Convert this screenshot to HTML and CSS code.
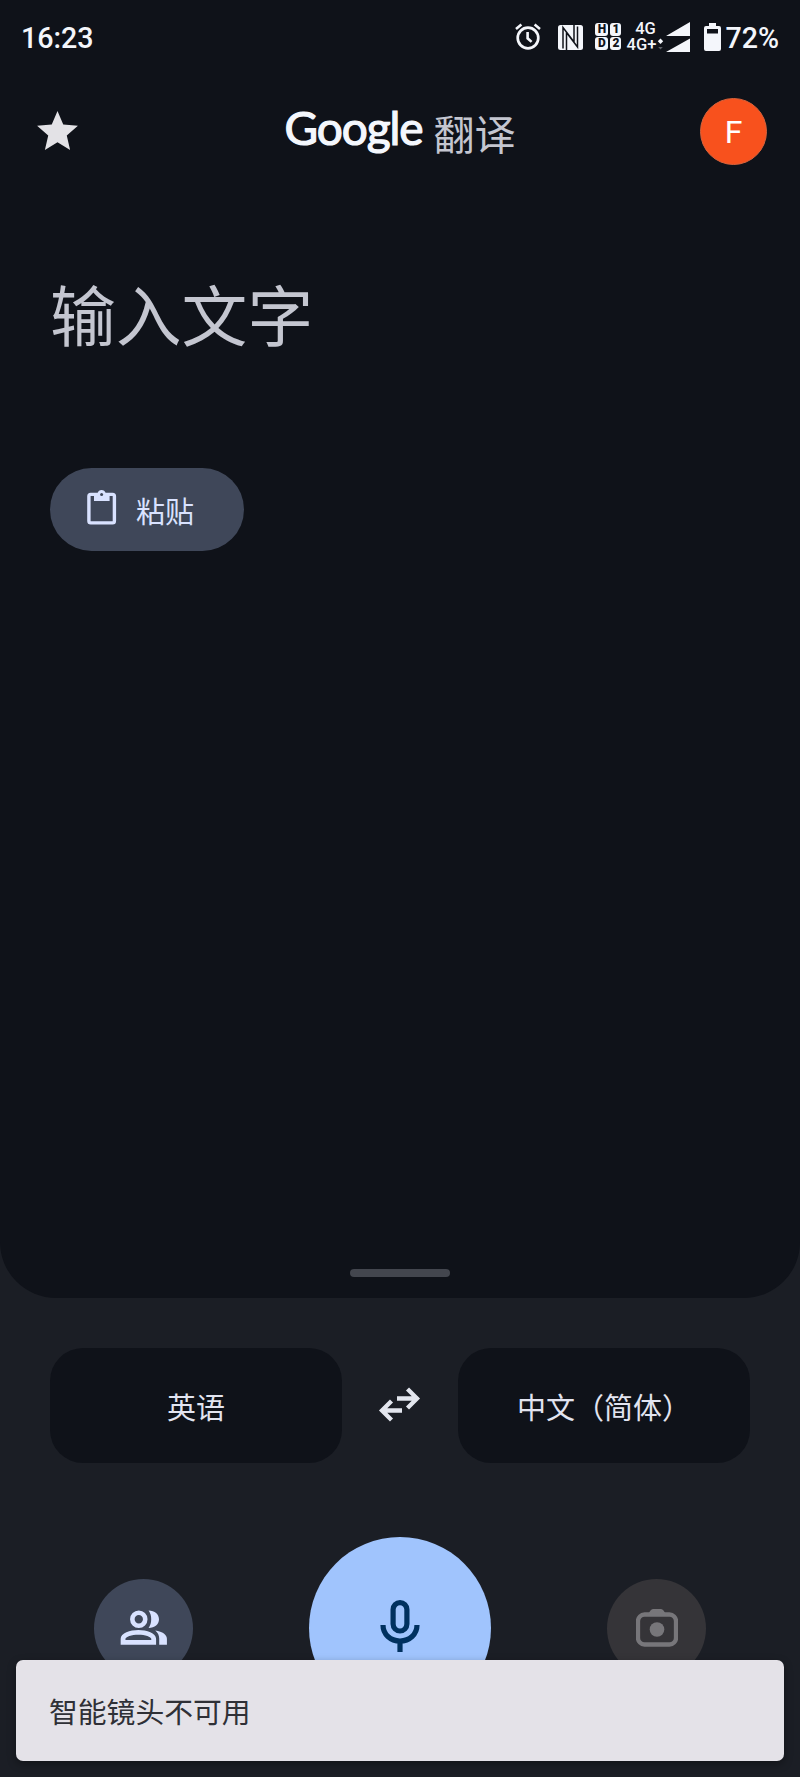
FILE: index.html
```html
<!DOCTYPE html>
<html lang="zh-CN">

<head>
    <meta charset="utf-8">
    <link rel="stylesheet" href="styles.css">
    <title>Google 翻译</title>
</head>

<body>
    <div class="app">
        <div class="panel">
            <div class="status-bar">
                <div class="time">16:23</div>
                <svg class="alarm" width="28" height="28" viewBox="0 0 28 28" fill="none" stroke="#f4f6fb">
                    <circle cx="14" cy="15" r="10.300" stroke-width="2.700" />
                    <path d="M13.600 9v6.300l4 3.600" stroke-width="2.600" />
                    <path d="M2 6l5.400-4.400M26 6l-5.400-4.400" stroke-width="2.600" />
                </svg>
                <svg class="nfc" width="25" height="25" viewBox="0 0 25 25">
                    <rect width="25" height="25" rx="2.500" fill="#f4f6fb" />
                    <path d="M8.500 25V7.500l11 14.500V1.500M16 0v17L5 2.500V23.500" fill="none" stroke="#10131a" stroke-width="1.500" />
                </svg>
                <div class="sim">
                    <span>H</span><span>1</span><span>D</span><span>2</span>
                </div>
                <div class="network">
                    <div>4G</div>
                    <div>4G+</div>
                </div>
                <svg class="signal" width="34" height="32" viewBox="0 0 34 32" fill="#f4f6fb">
                    <path d="M33 1v14H9zM33 17.500v13.500H9z" />
                    <path d="M3.500 17.500l2.700 2.700-2.700 2.700-2.700-2.700z" />
                    <path d="M3.500 28.500l2.300-2.500H1.200z" opacity=".35" />
                </svg>
                <svg class="battery" width="17" height="28" viewBox="0 0 17 28" fill="#f4f6fb">
                    <path fill-rule="evenodd" d="M5 0h7v3h3q2 0 2 2v21q0 2-2 2H2q-2 0-2-2V5q0-2 2-2h3zM3 6v4.500h11V6z" />
                </svg>
                <div class="percent">72%</div>
            </div>

            <div class="header">
                <svg class="star" width="49" height="49" viewBox="0 0 24 24" fill="#e3e2e6">
                    <path d="M12 17.270L18.180 21l-1.640-7.030L22 9.240l-7.190-.61L12 2 9.190 8.630 2 9.240l5.460 4.730L5.820 21z" />
                </svg>
                <div class="logo">
                    <span class="google">Google</span>
                    <span class="product">翻译</span>
                </div>
                <div class="avatar">F</div>
            </div>

            <div class="placeholder">输入文字</div>

            <div class="paste">
                <svg width="30" height="36" viewBox="0 0 30 36" fill="none" stroke="#d9e2ff">
                    <rect x="1.900" y="4.400" width="25.500" height="28.500" rx="1.800" stroke-width="3.400" />
                    <path d="M7 3h3.600a4.200 4.200 0 0 1 8 0h4v8H7z" fill="#d9e2ff" stroke="none" />
                    <circle cx="14.600" cy="4.500" r="1.500" fill="#3f4759" stroke="none" />
                </svg>
                <span>粘贴</span>
            </div>

            <div class="handle"></div>
        </div>

        <div class="languages">
            <div class="language">英语</div>
            <svg class="swap" width="44" height="36" viewBox="0 0 44 36" fill="none" stroke="#e3e6ee" stroke-width="4.300">
                <path d="M19 11.500h21M29.500 2l9.500 9.500-9.500 9.500M24 23.500H3M13.500 14L4 23.500l9.500 9.500" />
            </svg>
            <div class="language">中文（简体）</div>
        </div>

        <div class="actions">
            <div class="action">
                <svg width="50" height="50" viewBox="0 0 24 24" fill="#d9e2ff">
                    <path fill-rule="evenodd" d="M9.500 3.600a4.200 4.200 0 1 0 0 8.400 4.200 4.200 0 0 0 0-8.400zm0 2.200a2 2 0 1 1 0 4 2 2 0 0 1 0-4zM.8 20v-2.800c0-2.800 4.500-4.200 8.500-4.200s8.500 1.400 8.500 4.200V20zm2.300-2.200h12.400v-.6c0-1-3-2-6.200-2s-6.200 1-6.200 2z" />
                    <path d="M14.200 3.600c3 0 5 1.800 5 4.200s-2 4.200-5 4.200c1.700-2.200 1.700-6.200 0-8.400zM17.400 13.200c3.600.6 5.600 2 5.600 4V20h-3.700v-3c0-1.500-.7-2.800-1.900-3.800z" />
                </svg>
            </div>
            <div class="action mic">
                <svg width="40" height="54" viewBox="0 0 40 54" fill="none" stroke="#00315f" stroke-width="5.200">
                    <rect x="13.100" y="2.600" width="13.800" height="28.400" rx="6.900" />
                    <path d="M3 25c0 9.300 7.400 16 17 16s17-6.700 17-16M20 41v11" />
                </svg>
            </div>
            <div class="action disabled">
                <svg width="42" height="40" viewBox="0 0 42 40" fill="none" stroke="#77767a">
                    <rect x="2" y="6.500" width="38" height="30" rx="6.500" stroke-width="4.300" />
                    <path d="M11 7.500l3.500-5q1-1.500 2.500-1.500h8q1.500 0 2.500 1.500l3.500 5z" fill="#77767a" stroke="none" />
                    <circle cx="21" cy="21.500" r="7.300" fill="#77767a" stroke="none" />
                </svg>
            </div>
        </div>

        <div class="snackbar">智能镜头不可用</div>
    </div>
</body>

</html>
```
FILE: styles.css
```css
* {
    box-sizing: border-box;
}

body {
    margin: 0;
    background-color: #1b1e25;
    color: #e2e4f0;
    font-family: Roboto, "Noto Sans CJK SC", sans-serif;
}

svg {
    display: block;
    flex: none;
}

.app {
    position: relative;
    width: 800px;
    height: 1777px;
    overflow: hidden;
}

.panel {
    display: flex;
    flex-direction: column;
    height: 1298px;
    padding-bottom: 21px;
    background-color: #0f1219;
    border-radius: 0 0 56px 56px;
}

/* status bar */
.status-bar {
    display: flex;
    align-items: center;
    height: 76px;
    padding: 0 21px;
    color: #f4f6fb;
    font-size: 28.600px;
    font-weight: 500;
}

.time {
    margin-right: auto;
}

.alarm {
    margin: -2px 16px 0 0;
}

.nfc {
    margin: -2px 12px 0 0;
}

.sim {
    display: grid;
    grid-template-columns: 13px 11px;
    gap: 1px 2px;
    margin: -3px 4px 0 0;
}

.sim span {
    height: 13px;
    border-radius: 3px;
    background-color: #f4f6fb;
    color: #10131a;
    font-size: 12px;
    font-weight: 900;
    line-height: 13px;
    text-align: center;
}

.network {
    width: 32px;
    margin-top: -2px;
    font-size: 16.500px;
    line-height: 16px;
    text-align: center;
    white-space: nowrap;
}

.network div:first-child {
    padding-left: 8px;
}

.signal {
    margin: -3px 13px 0 0;
}

.battery {
    margin: -2px 4px 0 0;
}

/* header */
.header {
    display: flex;
    align-items: center;
    justify-content: space-between;
    height: 111px;
    padding: 0 33px;
}

.logo {
    display: flex;
    align-items: baseline;
    margin: 6px 0 0 18px;
}

.google {
    margin-bottom: 7px;
    color: #f4f7fd;
    font-family: Lato, sans-serif;
    font-size: 46px;
    letter-spacing: -1.100px;
    line-height: 56px;
    -webkit-text-stroke: 1.200px #f4f7fd;
    transform: translateY(-5px);
}

.product {
    margin-left: 11px;
    color: #c4c6d0;
    font-size: 41px;
}

.avatar {
    width: 67px;
    height: 67px;
    border: 1px solid #d8633c;
    border-radius: 50%;
    background-color: #f8511d;
    color: #fff;
    font-size: 32px;
    line-height: 66px;
    text-align: center;
}

.placeholder {
    margin: 84px 0 0 50px;
    color: #c4c6d0;
    font-size: 65.800px;
    line-height: 96px;
}

.paste {
    display: flex;
    align-items: center;
    align-self: flex-start;
    gap: 19px;
    width: 194px;
    height: 83px;
    margin: 101px 0 0 50px;
    padding-left: 37px;
    border-radius: 42px;
    background-color: #3f4759;
    color: #d9e2ff;
    font-size: 29px;
}

.paste svg {
    margin-top: -3px;
}

.handle {
    align-self: center;
    width: 100px;
    height: 8px;
    margin-top: auto;
    border-radius: 4px;
    background-color: #43464e;
}

/* language picker */
.languages {
    display: flex;
    align-items: center;
    justify-content: space-between;
    padding: 50px 50px 0;
}

.language {
    width: 292px;
    height: 115px;
    padding-top: 4px;
    border-radius: 33px;
    background-color: #0f1219;
    font-size: 29px;
    line-height: 115px;
    text-align: center;
}

.actions {
    display: flex;
    align-items: center;
    justify-content: space-between;
    padding: 74px 94px 0;
}

.action {
    display: flex;
    align-items: center;
    justify-content: center;
    width: 99px;
    height: 99px;
    border-radius: 50%;
    background-color: #3f4759;
}

.mic {
    width: 182px;
    height: 182px;
    padding-bottom: 2px;
    background-color: #a0c4fd;
}

.disabled {
    background-color: #353438;
}

.snackbar {
    position: absolute;
    left: 16px;
    right: 16px;
    bottom: 16px;
    height: 101px;
    padding: 3px 0 0 33px;
    border-radius: 7px;
    background-color: #e4e2e8;
    box-shadow: 0 3px 8px rgba(0, 0, 0, 0.35);
    color: #2f3036;
    font-size: 28.800px;
    line-height: 101px;
}

.swap {
    margin-top: -2px;
}
```
